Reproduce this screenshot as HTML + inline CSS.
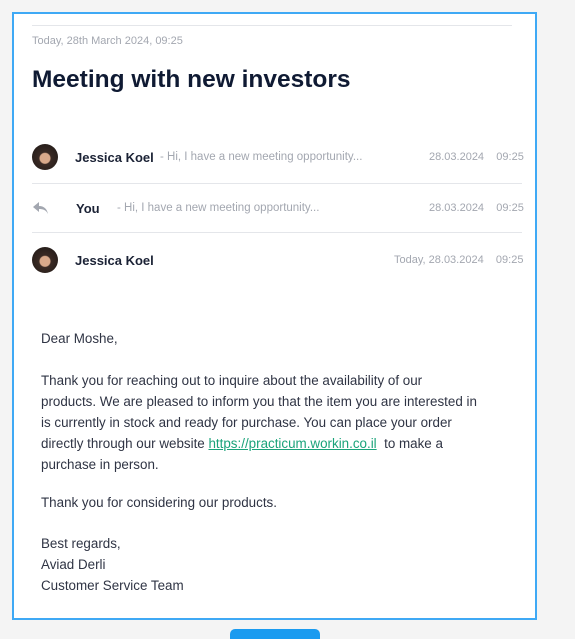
<!DOCTYPE html>
<html><head><style>
*{margin:0;padding:0;box-sizing:border-box}
body{width:575px;height:634px;background:#f4f4f4;font-family:"Liberation Sans",sans-serif;position:relative;overflow:hidden}
.card{position:absolute;left:12px;top:12px;width:525px;height:608px;background:#fff;border:2px solid #3fa9f5}
.abs{position:absolute;white-space:nowrap}
.line{position:absolute;height:1px;background:#e4e6ea}
.gray{color:#a3a7b0}
.name{font-size:13px;font-weight:bold;color:#1b2235}
.av{position:absolute;width:26px;height:26px;border-radius:50%;background:radial-gradient(circle at 50% 55%,#d9a98a 0 5px,#3a2a24 6px,#2a201c 13px)}
.p{position:absolute;left:41px;font-size:13.4px;line-height:22px;color:#2f3444;white-space:nowrap}
.p a{color:#1aa37a;text-decoration:underline}
.btn{position:absolute;left:230px;top:629px;width:90px;height:10px;background:#1a9bf0;border-radius:5px 5px 0 0}
</style></head><body>
<div class="card"></div>
<div class="line" style="left:32px;top:25px;width:480px"></div>
<div class="abs gray" style="left:32px;top:35px;font-size:11px">Today, 28th March 2024, 09:25</div>
<div class="abs" style="left:32px;top:66px;font-size:24.5px;font-weight:bold;color:#0f1a33">Meeting with new investors</div>

<div class="av" style="left:32px;top:144px"></div>
<div class="abs name" style="left:75px;top:150px">Jessica Koel</div>
<div class="abs gray" style="left:160px;top:151px;font-size:11.5px">- Hi, I have a new meeting opportunity...</div>
<div class="abs gray" style="left:429px;top:151px;font-size:11px">28.03.2024&nbsp;&nbsp;&nbsp;&nbsp;09:25</div>
<div class="line" style="left:32px;top:183px;width:490px"></div>

<svg class="abs" style="left:33px;top:202px" width="15" height="12" viewBox="0 0 15 12"><path d="M6 0L0 5l6 5V7c4 0 7 1 9 5-1-5-4-8-9-8z" fill="#a3a7b0"/></svg>
<div class="abs name" style="left:76px;top:201px">You</div>
<div class="abs gray" style="left:117px;top:202px;font-size:11.5px">- Hi, I have a new meeting opportunity...</div>
<div class="abs gray" style="left:429px;top:202px;font-size:11px">28.03.2024&nbsp;&nbsp;&nbsp;&nbsp;09:25</div>
<div class="line" style="left:32px;top:232px;width:490px"></div>

<div class="av" style="left:32px;top:247px"></div>
<div class="abs name" style="left:75px;top:253px">Jessica Koel</div>
<div class="abs gray" style="left:394px;top:254px;font-size:11px">Today, 28.03.2024&nbsp;&nbsp;&nbsp;&nbsp;09:25</div>

<div class="p" style="top:328px">Dear Moshe,</div>
<div class="p" style="top:370px;line-height:21px">Thank you for reaching out to inquire about the availability of our<br>products. We are pleased to inform you that the item you are interested in<br>is currently in stock and ready for purchase. You can place your order<br>directly through our website <a>https://practicum.workin.co.il</a>&nbsp; to make a<br>purchase in person.</div>
<div class="p" style="top:492px">Thank you for considering our products.</div>
<div class="p" style="top:533px;line-height:21px">Best regards,<br>Aviad Derli<br>Customer Service Team</div>
<div class="btn"></div>
</body></html>
